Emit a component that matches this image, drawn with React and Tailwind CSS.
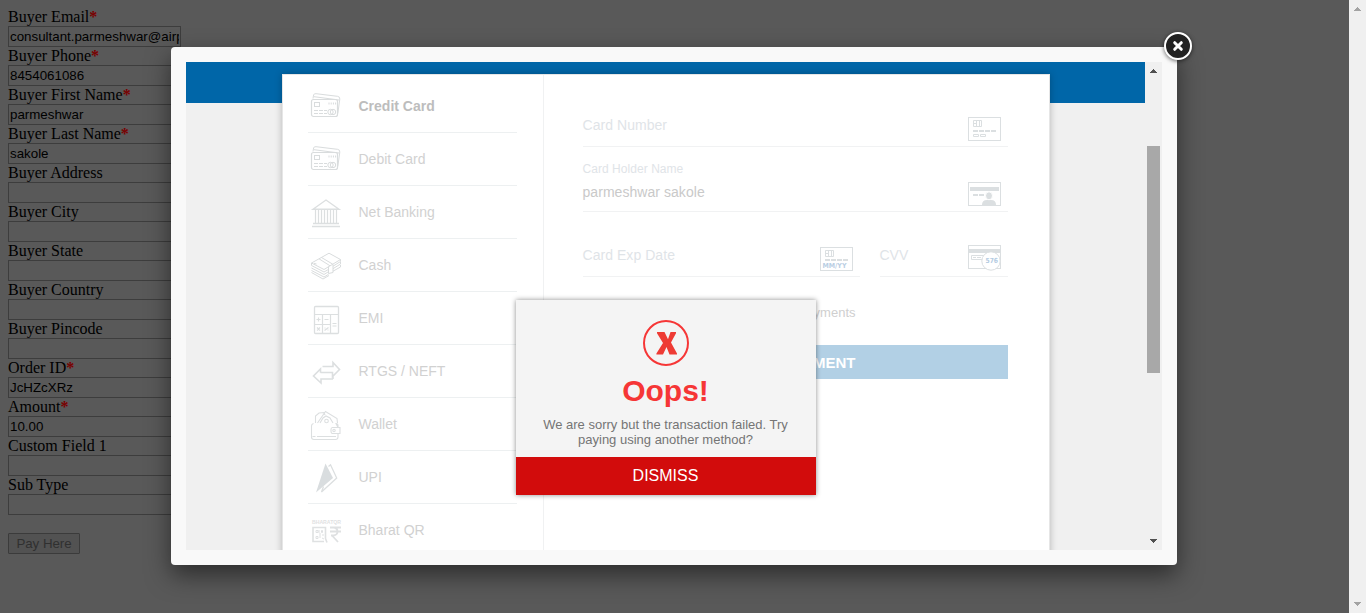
const FIELDS = [
  { label: 'Buyer Email', required: true, value: 'consultant.parmeshwar@airpay.co.in' },
  { label: 'Buyer Phone', required: true, value: '8454061086' },
  { label: 'Buyer First Name', required: true, value: 'parmeshwar' },
  { label: 'Buyer Last Name', required: true, value: 'sakole' },
  { label: 'Buyer Address' },
  { label: 'Buyer City' },
  { label: 'Buyer State' },
  { label: 'Buyer Country' },
  { label: 'Buyer Pincode' },
  { label: 'Order ID', required: true, value: 'JcHZcXRz' },
  { label: 'Amount', required: true, value: '10.00' },
  { label: 'Custom Field 1' },
  { label: 'Sub Type' },
];

function BuyerForm() {
  return (
    <div className="flex flex-1 flex-col items-start p-2 text-black">
      {FIELDS.map((f) => (
        <div key={f.label} className="w-[173px]">
          <div className="h-[18px] whitespace-nowrap font-['Liberation_Serif',serif] text-[16px] leading-[18px]">
            {f.label}
            {f.required && <span className="font-bold text-[#7a0000]">*</span>}
          </div>
          <div className="h-[21px] border border-[#3d3d3d] px-px text-[13.33px] leading-[19px]">
            <div className="overflow-hidden whitespace-nowrap">{f.value}</div>
          </div>
        </div>
      ))}
      <div className="mt-[18px] flex h-[21px] w-[72px] items-center justify-center rounded-[1px] border border-[#3b3b3b] bg-[#525252] text-[13.33px] tracking-[-0.05px] text-[#303030]">
        Pay Here
      </div>
    </div>
  );
}

function CardsIcon() {
  return (
    <svg width="32" height="32" viewBox="0 1 32 32" fill="none" stroke="#d9dcdd" className="shrink-0">
      <rect x="1.5" y="10.5" width="26" height="17" rx="2" strokeWidth="1.2" />
      <path d="M3 9.5 L3.6 6 Q4 4.4 6 4.7 L27.5 7.3 Q30 7.6 29.8 10 L27.8 24.5 M4 7.7 L29 11" />
      <rect x="4.5" y="13.5" width="5" height="4" />
      <path d="M18.5 14.5h9" strokeWidth="2" strokeDasharray="1 1.2" />
      <path d="M4 21.5h13M4 24.5h4M9 24.5h8" strokeDasharray="4 1" />
      <circle cx="20.5" cy="23" r="2.7" /><circle cx="23" cy="23" r="2.7" />
    </svg>
  );
}

function BankIcon() {
  return (
    <svg width="32" height="32" viewBox="0 0 32 32" fill="none" stroke="#dcdfe0" className="mt-[2px] shrink-0">
      <path d="M3 12.2 L16 3 L29 12.2 Z" strokeWidth="1.4" />
      <path d="M5.5 13v13M8.5 13v13M11.5 13v13M14.5 13v13M17.5 13v13M20.5 13v13M23.5 13v13M26.5 13v13" strokeWidth="1.2" />
      <path d="M3 26.5h26M2 29.5h28" strokeWidth="1.5" />
    </svg>
  );
}

function CashIcon() {
  return (
    <svg width="32" height="32" viewBox="0 0 32 32" fill="none" stroke="#d9dcdd" strokeLinejoin="round" className="mt-[2px] shrink-0">
      <path d="M1.5 13 L19 3.2 L30.5 9.5 L14 19.5 Z M9 8.8 L20 15.8 M11.5 7.5 L22.8 14.2 M4 13.3 L6.5 14" />
      <path d="M18.5 16.5v7l4.5-1v-8" />
      <path d="M1.5 15.5 L14 22 L18 19.7 M1.5 18 L14 24.5 L18 22 M1.5 20.5 L14 27 L18.5 24.3 M1.5 22.5 L13 29 L19 25.5 M1.5 13v2.5 M30.5 9.5v2 L23 16.2 M30.5 12 v2L23 18.7 M30.5 15v2L23 21.2" />
    </svg>
  );
}

function CalculatorIcon() {
  return (
    <svg width="32" height="32" viewBox="0 0 32 32" fill="none" stroke="#dcdfe0" className="mt-[4px] shrink-0">
      <rect x="4.5" y="2.5" width="24" height="27" rx="1" strokeWidth="1.3" />
      <path d="M4 10.5h24M4 20.5h16M12.5 10.5V30M20.5 10.5V30" strokeWidth="1.2" />
      <path d="M6.5 15.5h4M8.5 13.5v4M14.5 15.5h4M22.5 19.5h4M22.5 22h4M7 23.5l3 3M10 23.5l-3 3M14.5 26.5l4-3M14.5 24h1M17.5 26h1" strokeWidth="1.2" />
    </svg>
  );
}

function TransferIcon() {
  return (
    <svg width="32" height="32" viewBox="0 0 32 32" fill="none" stroke="#dcdfe0" strokeWidth="1.6" className="mt-[4px] shrink-0">
      <path d="M12.5 9.5h10.5V5.5l6.5 7-7 7v-4h-12" />
      <path d="M23 22h-12v4L3.5 19l7-7v3.8M23 22v-2.5" />
    </svg>
  );
}

function WalletIcon() {
  return (
    <svg width="32" height="32" viewBox="0 0 32 32" fill="none" stroke="#dcdfe0" strokeWidth="1.1" className="mt-[4px] shrink-0">
      <path d="M3.5 13.5 Q1.5 14 1.5 16V27 Q1.5 29.5 4 29.5H25.5Q28 29.5 28 27V24M28 17.5V15.5Q28 13.5 26 13.5ZM2.5 26.5h3M7 26.5h19" />
      <path d="M22.5 17.5H30v6h-7.5Q21 23.5 21 21v-1.5Q21 17.5 22.5 17.5Z" /><circle cx="24" cy="20.5" r="1.2" />
      <path d="M5.5 13 V6 L9 3 L14 2.5 L15 5 M7.5 13 L15.5 1.5 L27 8.5 L27.5 13 M10 13 L13 8 L16 6 L20 8 L23 13" />
      <circle cx="16.5" cy="11" r="1.8" />
    </svg>
  );
}

function UpiIcon() {
  return (
    <svg width="32" height="32" viewBox="0 0 32 32" className="mt-[2px] shrink-0">
      <path d="M15.5 1.5 L6 30.5 L23 16 Z" fill="#d9dddf" />
      <path d="M18.5 4.5 L20.5 2.8 L26.7 16 L11.5 30 L13.5 24.5" fill="none" stroke="#dcdfe0" strokeWidth="1.3" />
    </svg>
  );
}

function BharatIcon() {
  return (
    <svg width="32" height="32" viewBox="0 0 32 32" fill="none" stroke="#dfe1e2" className="mt-[2px] shrink-0">
      <text x="2" y="9.3" fontSize="5" fontWeight="bold" fontFamily="Liberation Sans" fill="#dfe1e2" stroke="none" textLength="29" lengthAdjust="spacingAndGlyphs">BHARATQR</text>
      <path d="M14 26.5H3V12.5h12.5v11l1.5 4" strokeWidth="1.6" />
      <path d="M6 15.5h2v2H6zM11.5 15.5h1v2h-1zM6 21.5h2v2H6zM10 18v5M12 20h2M9 15v3M12 23l2 1" />
      <path d="M20 12.5h11M20 16.5h11M21 20.5h2.5q4-.5 4-4t-4-4M22 20.5l6 6.5" strokeWidth="1.8" />
    </svg>
  );
}

const METHODS = [
  ['Credit Card', CardsIcon],
  ['Debit Card', CardsIcon],
  ['Net Banking', BankIcon],
  ['Cash', CashIcon],
  ['EMI', CalculatorIcon],
  ['RTGS / NEFT', TransferIcon],
  ['Wallet', WalletIcon],
  ['UPI', UpiIcon],
  ['Bharat QR', BharatIcon],
];

function MethodList() {
  return (
    <div className="flex w-[261px] shrink-0 flex-col border-r border-[#f0f1f2] pl-[25px] pr-[26px] pt-[5px]">
      {METHODS.map(([name, Icon], i) => (
        <div key={name} className="flex h-[53px] w-[209px] shrink-0 items-center gap-[17px] border-b border-[#edf0f1] pl-[2px]">
          <Icon />
          <span className={i === 0 ? 'text-[14px] font-bold text-[#bdbdbd]' : 'text-[14px] text-[#d1d1d1]'}>{name}</span>
        </div>
      ))}
    </div>
  );
}

function ChipCard({ dated }) {
  return (
    <svg width="33" height="24" viewBox="0 0 33 24" fill="none" stroke="#dbdfe1" className="shrink-0">
      <rect x="0.5" y="0.5" width="32" height="23" />
      <path d="M5.5 3.5h8v6h-8zM8.5 3.5v6M11.5 3.5v6M5.5 6.5h3" />
      <path d="M5 14h5M11 14h5M17 14h5M23 14h5" strokeWidth="2" transform={dated ? 'translate(0,-1)' : undefined} />
      {dated ? (
        <text x="2.5" y="21" fontSize="7" fontWeight="bold" fontFamily="DejaVu Sans" fill="#b9cee3" stroke="none" textLength="24" lengthAdjust="spacingAndGlyphs">MM/YY</text>
      ) : (
        <path d="M5.5 17.5h5v2h-5zM12.5 17.5h5v2h-5z" />
      )}
    </svg>
  );
}

function HolderCard() {
  return (
    <svg width="33" height="24" viewBox="0 0 33 24" fill="none" stroke="#dbdfe1" className="shrink-0">
      <rect x="0.5" y="0.5" width="32" height="23" />
      <path d="M2 7h29" strokeWidth="4" />
      <path d="M5 13h5M11 13h5" strokeWidth="2" />
      <path d="M14 23q0-5 5-5h4q5 0 5 5z" fill="#dbdfe1" stroke="none" />
      <ellipse cx="21" cy="13.8" rx="3.5" ry="4" fill="#dbdfe1" stroke="#fff" />
    </svg>
  );
}

function CvvCard() {
  return (
    <svg width="33" height="26" viewBox="0 0 33 26" fill="none" stroke="#dbdfe1" className="shrink-0">
      <rect x="0.5" y="0.5" width="32" height="23" />
      <path d="M1 6h31" strokeWidth="4" />
      <path d="M3.5 10.5h12v4h-12zM5 12.5h3M9 12.5h4" />
      <circle cx="23" cy="16" r="9.2" fill="#fff" />
      <text x="17.5" y="18" fontSize="7" fontWeight="bold" fontFamily="DejaVu Sans" fill="#b3cbe2" stroke="none" textLength="12.5" lengthAdjust="spacingAndGlyphs">576</text>
    </svg>
  );
}

function CardForm() {
  return (
    <div className="flex w-[464px] shrink-0 flex-col pl-[39px] pt-[29px] text-[14px] leading-4 text-[#dfe4e8]">
      <div className="flex h-[43px] items-start justify-between border-b border-[#f1f2f3] pr-[7px] pt-[13px]">
        <span className="tracking-[0.05px]">Card Number</span>
        <ChipCard />
      </div>
      <div className="flex h-[65px] items-start justify-between border-b border-[#f1f2f3] pr-[7px]">
        <div className="flex flex-col pt-[14px]">
          <span className="text-[12px] tracking-[0.05px]">Card Holder Name</span>
          <span className="mt-[7px] tracking-[0.05px] text-[#c9c9c9]">parmeshwar sakole</span>
        </div>
        <div className="flex pt-[35px]"><HolderCard /></div>
      </div>
      <div className="flex gap-[20px]">
        <div className="flex h-[65px] w-[277px] items-start justify-between border-b border-[#f1f2f3] pr-[7px] pt-[35px]">
          <span className="tracking-[0.05px]">Card Exp Date</span>
          <ChipCard dated />
        </div>
        <div className="flex h-[65px] flex-1 items-start justify-between border-b border-[#f1f2f3] pr-[7px] pt-[33px]">
          <span className="pt-[2px]">CVV</span>
          <CvvCard />
        </div>
      </div>
      <div className="mt-[28px] w-[273px] text-right text-[13px] text-[#cfcfcf]">Save this card for faster payments</div>
      <div className="mt-[24px] flex h-[34px] items-center bg-[#b2d0e5] pt-[2px] text-[15px] font-bold text-white">
        <span className="w-[273px] text-right">MAKE PAYMENT</span>
      </div>
    </div>
  );
}

function FailureDialog() {
  return (
    <div className="absolute left-[330px] top-[238px] flex h-[195px] w-[300px] flex-col items-center bg-[#f4f4f4] shadow-[0_0_5px_rgba(0,0,0,0.45)]">
      <svg width="46" height="46" viewBox="0 0 46 46" className="mt-[20px] shrink-0">
        <circle cx="23" cy="23" r="22" fill="none" stroke="#f63636" strokeWidth="2" />
        <path d="M14 12H21.5L25 19.2L27.5 12H33V13.2L28 22.5L34 33.4V34.5H26.5L23.5 27L20 34.5H13.4V33.4L20 23L14 13.2Z" fill="#ee3b34" />
      </svg>
      <div className="mt-[7px] pr-[1px] text-[30px] font-bold leading-[36px] text-[#f63636]">Oops!</div>
      <div className="mt-[8px] whitespace-nowrap pr-[1px] text-center text-[13px] leading-[15px] text-[#757575]">
        We are sorry but the transaction failed. Try
        <br />
        paying using another method?
      </div>
      <div className="mt-auto flex h-[38px] w-full items-center justify-center bg-[#d20c0c] pr-[1px] text-[16px] text-white">DISMISS</div>
    </div>
  );
}

function Arrow({ down, faded }) {
  return (
    <svg width="7" height="4" viewBox="0 0 7 4" className="shrink-0" shapeRendering="crispEdges">
      <path d={down ? 'M0 0h7v1H0zM1 1h5v1H1zM2 2h3v1H2zM3 3h1v1H3z' : 'M3 0h1v1H3zM2 1h3v1H2zM1 2h5v1H1zM0 3h7v1H0z'} fill={faded ? '#a3a3a3' : '#505050'} />
    </svg>
  );
}

function PaymentModal() {
  return (
    <div className="absolute left-[171px] top-[47px] h-[518px] w-[1006px] rounded-[4px] bg-[#f9f9f9] p-[15px] shadow-[0_10px_25px_rgba(0,0,0,0.5)]">
      <div className="relative flex h-[488px] w-[976px] overflow-hidden bg-[#f0f0f0]">
        <div className="flex h-full w-[959px] justify-center bg-[linear-gradient(#0066a8_41px,#f0f0f0_41px)] pt-[12px]">
          <div className="flex h-[520px] w-[768px] border border-[#e6e6e6] bg-white shadow-[0_0_7px_rgba(0,0,0,0.25)]">
            <MethodList />
            <CardForm />
          </div>
        </div>
        <div className="flex w-[17px] flex-col items-center py-[7px]">
          <Arrow />
          <div className="mt-[73px] h-[227px] w-[13px] bg-[#a8a8a8]" />
          <div className="mt-auto flex"><Arrow down /></div>
        </div>
        <FailureDialog />
      </div>
      <svg width="36" height="36" viewBox="0 0 36 36" className="absolute -right-[18px] -top-[18px] drop-shadow-[0_1px_2px_rgba(0,0,0,0.6)]">
        <circle cx="19" cy="17" r="13" fill="#222" stroke="#fff" strokeWidth="2" />
        <path d="M15.7 13.7l6.6 6.6M22.3 13.7l-6.6 6.6" stroke="#fff" strokeWidth="3" strokeLinecap="round" />
      </svg>
    </div>
  );
}

export default function App() {
  return (
    <div className="relative flex h-[613px] w-full overflow-hidden bg-[#595959] font-['Liberation_Sans',Arial,sans-serif]">
      <BuyerForm />
      <div className="flex w-[17px] flex-col items-center justify-between bg-[#f0f0f0] py-[7px]">
        <Arrow faded />
        <Arrow down faded />
      </div>
      <PaymentModal />
    </div>
  );
}
